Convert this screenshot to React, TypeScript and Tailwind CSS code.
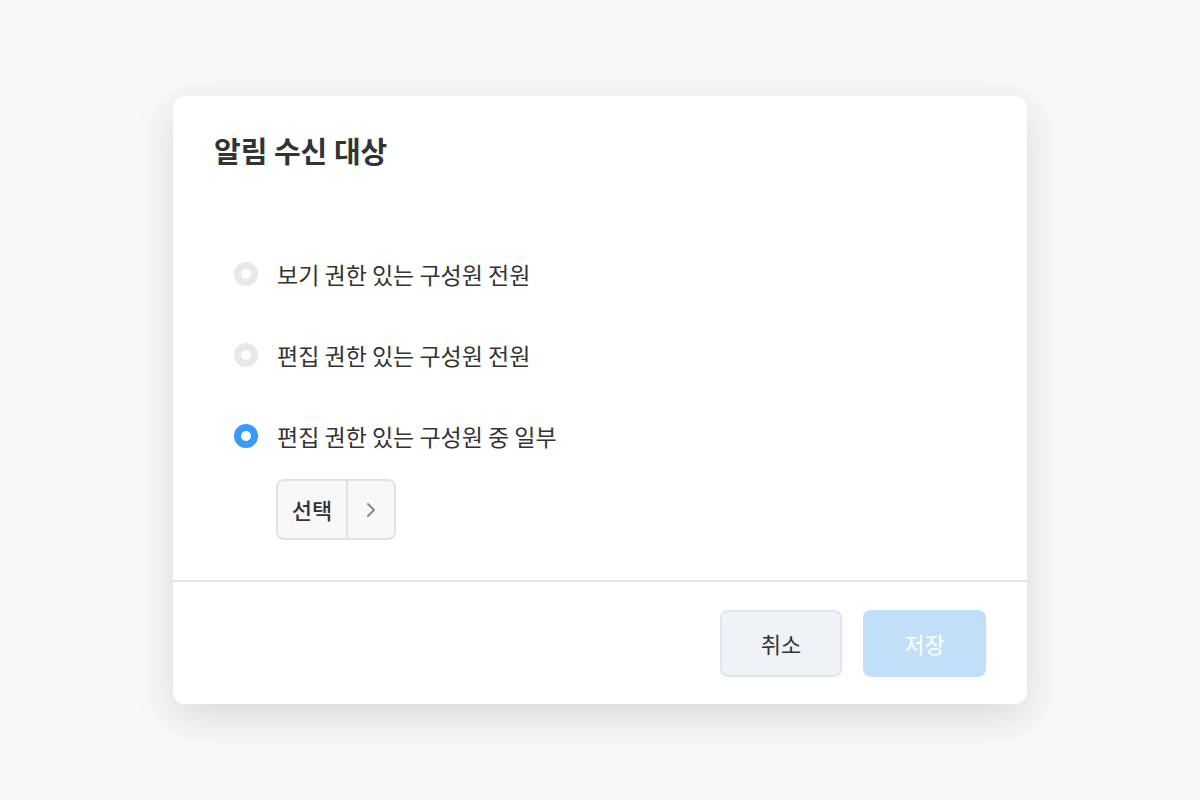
import React, { useState } from 'react';

const options = [
    { id: 'view', label: '보기 권한 있는 구성원 전원' },
    { id: 'edit', label: '편집 권한 있는 구성원 전원' },
    { id: 'some', label: '편집 권한 있는 구성원 중 일부' },
];

function Radio({ checked }: { checked: boolean }) {
    return (
        <span
            className={
                checked
                    ? 'w-6 h-6 rounded-full border-[7px] border-[#3b99fc] bg-white shrink-0'
                    : 'w-6 h-6 rounded-full border-[7px] border-[#e8e8e8] bg-white shrink-0'
            }
        />
    );
}

export default function App() {
    const [selected, setSelected] = useState('some');

    return (
        <div
            className="w-full h-[800px] bg-[#f8f8f8] flex items-center justify-center"
            style={{ fontFamily: '"Noto Sans CJK KR", "Noto Sans", sans-serif' }}
        >
            <div className="w-[854px] h-[608px] bg-white rounded-[12px] shadow-[0_12px_40px_rgba(0,0,0,0.13)] flex flex-col">
                {/* Header */}
                <div className="px-[41px] pt-[39px]">
                    <h2 className="text-[29px] leading-[30px] font-bold text-[#333333]">알림 수신 대상</h2>
                </div>

                {/* Body */}
                <div className="flex-1 pl-[61px] pt-[94px]">
                    <div className="flex flex-col gap-[51px]">
                        {options.map((opt) => (
                            <label
                                key={opt.id}
                                onClick={() => setSelected(opt.id)}
                                className="flex items-center gap-[19px] h-[30px] cursor-pointer"
                            >
                                <Radio checked={selected === opt.id} />
                                <span className="text-[23px] leading-[30px] text-[#333333]">{opt.label}</span>
                            </label>
                        ))}
                    </div>

                    {/* Member picker */}
                    <div className="ml-[42px] mt-[28px] inline-flex h-[61px] rounded-[8px] border-2 border-[#e2e2e2] bg-[#f8f8f8] overflow-hidden">
                        <span className="w-[68px] flex items-center justify-center text-[22px] font-medium text-[#333333]">선택</span>
                        <span className="w-[48px] flex items-center justify-center border-l-2 border-[#e2e2e2]">
                            <svg width="10" height="16" viewBox="0 0 10 16" fill="none">
                                <path d="M2 2l6 6-6 6" stroke="#8a8a8a" strokeWidth="2" strokeLinecap="round" strokeLinejoin="round" />
                            </svg>
                        </span>
                    </div>
                </div>

                {/* Footer */}
                <div className="h-[124px] border-t-2 border-[#e4e4e4] flex items-center justify-end gap-[21px] px-[41px]">
                    <button className="w-[122px] h-[67px] rounded-[8px] border-2 border-[#dfe5ef] bg-[#eff3f8] text-[22px] text-[#333333]">
                        취소
                    </button>
                    <button className="w-[123px] h-[67px] rounded-[8px] bg-[#c2dffa] text-[22px] text-white" disabled>
                        저장
                    </button>
                </div>
            </div>
        </div>
    );
}
